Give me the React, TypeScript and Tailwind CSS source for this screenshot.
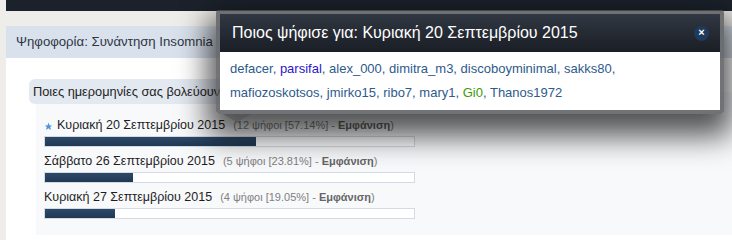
import React from 'react';

type Row = { date: string; votes: number; pct: string; width: number; star?: boolean };

const rows: Row[] = [
  { date: 'Κυριακή 20 Σεπτεμβρίου 2015', votes: 12, pct: '57.14', width: 57.14, star: true },
  { date: 'Σάββατο 26 Σεπτεμβρίου 2015', votes: 5, pct: '23.81', width: 23.81 },
  { date: 'Κυριακή 27 Σεπτεμβρίου 2015', votes: 4, pct: '19.05', width: 19.05 },
];

const Star: React.FC = () => (
  <svg width="9" height="9" viewBox="0 0 24 24" className="mr-[4px] mt-[3px]">
    <path d="M12 2l3 7h7l-5.5 4.5L18.5 21 12 16.5 5.5 21l2-7.5L2 9h7z" fill="#4a94dc" />
  </svg>
);

const VoteRow: React.FC<{ row: Row }> = ({ row }) => (
  <div className="mb-[3px]">
    <div className="flex items-center h-[22px] text-[12.5px] text-[#1e1e1e]">
      {row.star && <Star />}
      <span>{row.date}</span>
      <span className="ml-[8px] text-[11px] text-[#808080]">
        ({row.votes} ψήφοι [{row.pct}%] - <span className="font-bold text-[#666]">Εμφάνιση</span>)
      </span>
    </div>
    <div className="w-[371px] h-[11px] border border-[#d2dae3] bg-white">
      <div
        className="h-full bg-gradient-to-b from-[#2e4968] to-[#1f3855]"
        style={{ width: `${row.width}%` }}
      />
    </div>
  </div>
);

const names = ['defacer', 'parsifal', 'alex_000', 'dimitra_m3', 'discoboyminimal', 'sakks80'];
const names2 = ['mafiozoskotsos', 'jmirko15', 'ribo7', 'mary1', 'Gi0', 'Thanos1972'];

const nameColor = (n: string) =>
  n === 'parsifal' ? 'text-[#2a16c8]' : n === 'Gi0' ? 'text-[#3b9a0a]' : 'text-[#2d5b8c]';

const NameLine: React.FC<{ list: string[]; trailing?: boolean }> = ({ list, trailing }) => (
  <div className="h-[24px] leading-[24px]">
    {list.map((n, i) => (
      <React.Fragment key={n}>
        <span className={nameColor(n)}>{n}</span>
        {(i < list.length - 1 || trailing) && <span className="text-[#2d5b8c]">, </span>}
      </React.Fragment>
    ))}
  </div>
);

const App: React.FC = () => {
  return (
    <div className="relative w-[732px] h-[240px] overflow-hidden bg-[#eeede9] pl-[6px] font-['Liberation_Sans',Arial,sans-serif]">
      <div className="h-[11px] bg-[#1c222b]" />
      <div className="h-[15px]" />
      <div className="h-[32px] bg-[#d9e1ec] pl-[10px] flex items-center text-[13.2px] text-[#2e3643]">
        Ψηφοφορία: Συνάντηση Insomnia
      </div>
      <div className="bg-white h-[200px] pt-[21px] pl-[23px]">
        <div className="relative z-10 inline-flex items-center h-[25px] w-[360px] rounded-[6px] bg-[#e3e9f1] pl-[4px] text-[12.8px] text-[#1e1e1e]">
          Ποιες ημερομηνίες σας βολεύουν;
        </div>
        <div className="-mt-[12px] ml-[7px] bg-[#f8f9fb] pt-[22px] pb-[13px] pl-[8px]">
          {rows.map(r => (
            <VoteRow key={r.date} row={r} />
          ))}
        </div>
      </div>

      <div className="absolute z-20 left-[216px] top-[10px] w-[508px] rounded-[3px] border-[4px] border-[rgba(78,80,84,0.8)] shadow-[0_14px_30px_8px_rgba(0,0,0,0.68)]">
        <div className="flex items-center justify-between h-[38px] bg-gradient-to-b from-[#313843] to-[#1a1e25] pl-[12px] pr-[11px]">
          <span className="text-[16px] text-white">Ποιος ψήφισε για: Κυριακή 20 Σεπτεμβρίου 2015</span>
          <span className="flex items-center justify-center w-[15px] h-[15px] rounded-full bg-[#1e3a5c] text-white text-[11px] font-bold leading-none pb-[1px]">
            ×
          </span>
        </div>
        <div className="bg-white px-[10px] py-[5px] text-[13px]">
          <NameLine list={names} trailing />
          <NameLine list={names2} />
        </div>
        <div className="absolute left-[3px] -bottom-[12px] w-0 h-0 border-x-[14px] border-x-transparent border-t-[8px] border-t-[rgba(78,80,84,0.55)]" />
      </div>
    </div>
  );
};

export default App;
